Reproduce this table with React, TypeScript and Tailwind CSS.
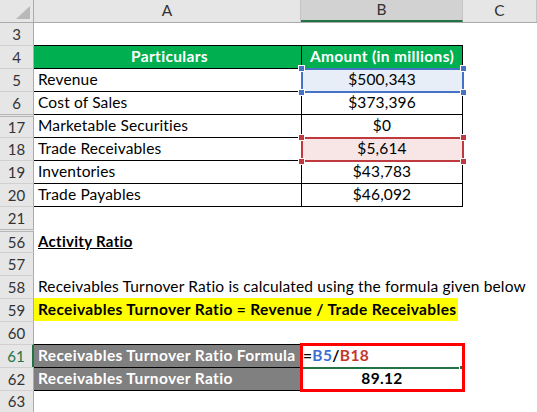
import { ReactNode } from "react";

// Row heading on the left of the sheet
function Head({ n, top = "border-t border-[#d0d0d0]", active }: { n: string; top?: string; active?: boolean }) {
  return (
    <div
      className={`w-[34px] shrink-0 h-full flex items-center justify-center bg-[#e6e6e6] text-[15px] tracking-normal ${top} ${
        active ? "border-r-2 border-r-[#217346] text-[#217346]" : "border-r border-r-[#ababab] text-[#333]"
      }`}
    >
      {n}
    </div>
  );
}

function Row({ children, h = "h-[23px]" }: { children: ReactNode; h?: string }) {
  return <div className={`flex ${h} w-full`}>{children}</div>;
}

// selection frame with corner handles, drawn over a cell
function Frame({ color }: { color: string }) {
  const handle = "absolute w-[7px] h-[7px] border border-white";
  return (
    <div className="absolute left-[-1px] top-[-1px] w-[163px] h-[25px] z-10 pointer-events-none">
      <div className="absolute inset-0 border-2" style={{ borderColor: color }} />
      <div className={`${handle} left-[-3px] top-[-3px]`} style={{ background: color }} />
      <div className={`${handle} right-[-3px] top-[-3px]`} style={{ background: color }} />
      <div className={`${handle} left-[-3px] bottom-[-3px]`} style={{ background: color }} />
      <div className={`${handle} right-[-3px] bottom-[-3px]`} style={{ background: color }} />
    </div>
  );
}

const A = "w-[267px] shrink-0 h-full flex items-center pl-[4px] whitespace-nowrap";
const B = "w-[162px] shrink-0 h-full flex items-center justify-center relative";
const BOLD = "font-bold tracking-[0.35px]";

export default function App() {
  return (
    <div className="w-[537px] h-[412px] overflow-hidden bg-white text-[15.5px] tracking-[0.15px] text-black font-['Lato',sans-serif] leading-none">
      {/* column headings */}
      <div className="flex h-[23px] border-b border-[#ababab] bg-[#e6e6e6] text-[#333] tracking-normal">
        <div className="w-[34px] shrink-0 border-r border-[#ababab] relative">
          <svg width="34" height="22" className="absolute left-0 top-0">
            <polygon points="30,6 30,19 16,19" fill="#b9b9b9" />
          </svg>
        </div>
        <div className="w-[267px] shrink-0 border-r border-[#c4c4c4] flex items-center justify-center">A</div>
        <div className="w-[162px] shrink-0 bg-[#d2d2d2] border-b-2 border-[#217346] border-r border-r-[#c4c4c4] flex items-center justify-center">
          B
        </div>
        <div className="flex-1 border-r border-[#c4c4c4] flex items-center justify-center">C</div>
      </div>

      <Row h="h-[22px]">
        <Head n="3" top="" />
      </Row>

      <Row>
        <Head n="4" />
        <div className={`${A} justify-center pl-0 border-t border-black bg-[#00b050] text-white ${BOLD}`}>Particulars</div>
        <div className={`${B} border-t border-x border-black bg-[#00b050] text-white ${BOLD}`}>Amount (in millions)</div>
      </Row>

      <Row>
        <Head n="5" />
        <div className={`${A} border-t border-black`}>Revenue</div>
        <div className={`${B} border-t border-x border-black bg-[#e8eef8]`}>
          $500,343
          <Frame color="#4472c4" />
        </div>
      </Row>

      <Row>
        <Head n="6" />
        <div className={`${A} border-t border-black`}>Cost of Sales</div>
        <div className={`${B} border-t border-x border-black`}>$373,396</div>
      </Row>

      <Row>
        <Head n="17" top="border-t-[3px] border-double border-[#b5b5b5]" />
        <div className={`${A} border-t border-black`}>Marketable Securities</div>
        <div className={`${B} border-t border-x border-black`}>$0</div>
      </Row>

      <Row>
        <Head n="18" />
        <div className={`${A} border-t border-black`}>Trade Receivables</div>
        <div className={`${B} border-t border-x border-black bg-[#f8e6e7]`}>
          $5,614
          <Frame color="#c0393f" />
        </div>
      </Row>

      <Row>
        <Head n="19" />
        <div className={`${A} border-t border-black`}>Inventories</div>
        <div className={`${B} border-t border-x border-black`}>$43,783</div>
      </Row>

      <Row>
        <Head n="20" />
        <div className={`${A} border-t border-black`}>Trade Payables</div>
        <div className={`${B} border-t border-x border-black`}>$46,092</div>
      </Row>

      <Row>
        <Head n="21" />
        <div className={`${A} border-t border-black`} />
        <div className={`${B} border-t border-black`} />
      </Row>

      <Row>
        <Head n="56" top="border-t-[3px] border-double border-[#b5b5b5]" />
        <div className={`${A} font-bold underline text-[15px] tracking-[0.3px] pt-[2px]`}>Activity Ratio</div>
      </Row>

      <Row>
        <Head n="57" />
      </Row>

      <Row>
        <Head n="58" />
        <div className="flex-1 h-full flex items-center pl-[4px] whitespace-nowrap">
          Receivables Turnover Ratio is calculated using the formula given below
        </div>
      </Row>

      <Row>
        <Head n="59" />
        <div className={`w-[424px] h-full flex items-center pl-[4px] whitespace-nowrap bg-[#ffff00] ${BOLD}`}>
          Receivables Turnover Ratio = Revenue / Trade Receivables
        </div>
      </Row>

      <Row>
        <Head n="60" />
      </Row>

      <Row>
        <Head n="61" active />
        <div className={`${A} border-t border-black bg-[#808080] text-white ${BOLD}`}>Receivables Turnover Ratio Formula</div>
        <div className={`${B} justify-start pl-[2px] border-t border-black ${BOLD}`}>
          <span>=</span>
          <span className="text-[#3b6fd4]">B5</span>
          <span>/</span>
          <span className="text-[#c0392b]">B18</span>
          <div className="absolute left-[1px] bottom-[-2px] w-[157px] h-[2px] bg-[#217346] z-10" />
          <div className="absolute left-[159px] bottom-[-2px] w-[3px] h-[3px] bg-[#217346] z-10" />
          <div className="absolute left-[-1px] top-[-2px] w-[165px] h-[49px] border-[3px] border-[#ff0000] z-20" />
        </div>
      </Row>

      <Row>
        <Head n="62" />
        <div className={`${A} border-t border-black bg-[#808080] text-white ${BOLD}`}>Receivables Turnover Ratio</div>
        <div className={`${B} ${BOLD}`}>89.12</div>
      </Row>

      <Row h="h-[22px]">
        <Head n="63" />
        <div className={`${A} border-t border-black`} />
      </Row>
    </div>
  );
}
